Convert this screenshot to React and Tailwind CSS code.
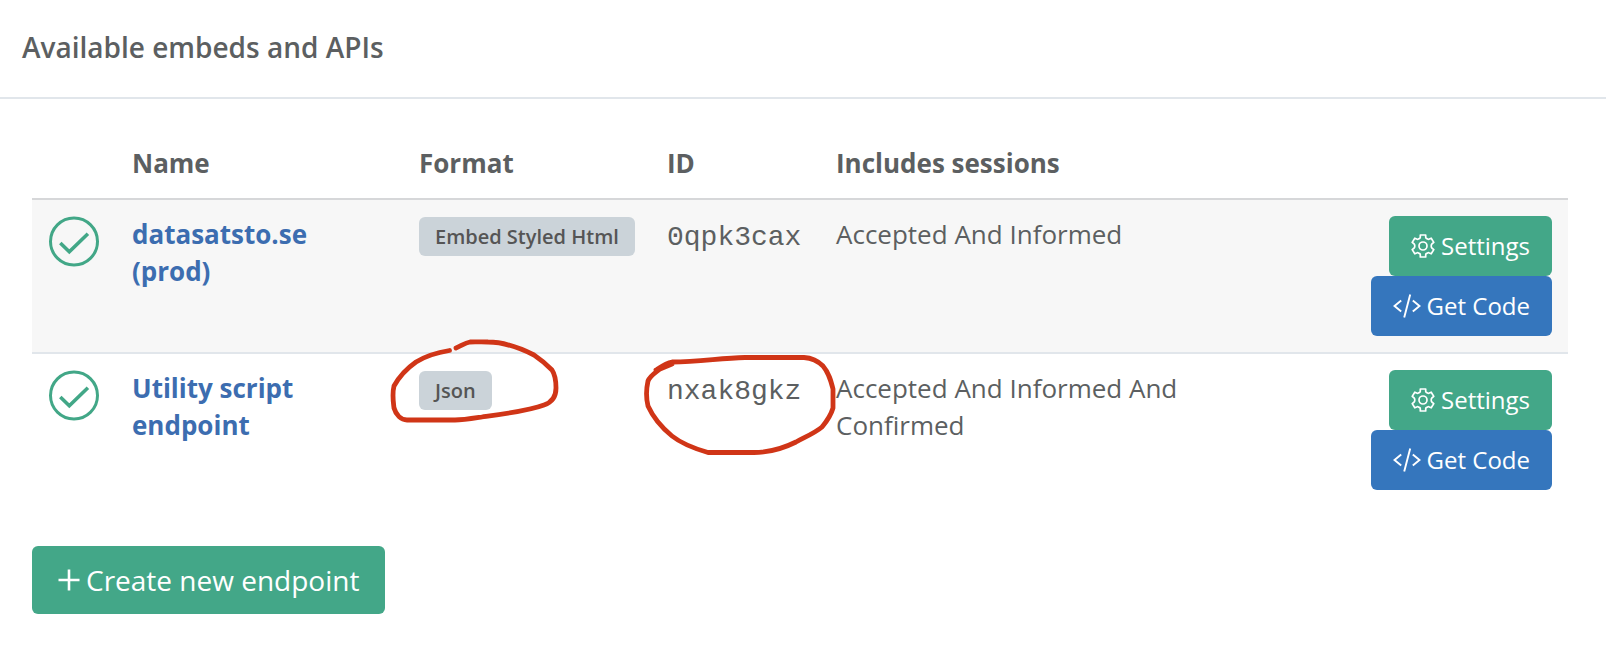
const font = "font-['Open_Sans','Noto_Sans',sans-serif]";

function CheckIcon() {
  return (
    <svg viewBox="0 0 52 52" className="block size-[52px]" fill="none" stroke="#42a787" strokeWidth="3" aria-hidden="true">
      <circle cx="26" cy="25.500" r="23.500" />
      <path strokeWidth="3.600" d="M12.300 27l9 8.700 18.600-17.900" />
    </svg>
  );
}

function GearIcon() {
  return (
    <svg viewBox="0 0 24 24" className="size-6" fill="none" stroke="currentColor" strokeWidth="1.7" strokeLinejoin="round" aria-hidden="true">
      <circle cx="12" cy="12" r="4" />
      <path d="M9.300 1h5.400v2.300q0 .9 1 1.300l.9 .5q.9 .5 1.700 0l1.900-.9 2.600 4.200-1.700 1.300q-.9 .8-.9 2.300t.9 2.300l1.700 1.300-2.600 4.200-1.900-.9q-.8-.5-1.700 0l-.9 .5q-1 .4-1 1.300V23H9.300v-2.300q0-.9-1-1.300l-.9-.5q-.9-.5-1.700 0L3.800 19.800 1.200 15.600l1.700-1.300q.9-.8 .9-2.300t-.9-2.300L1.200 8.400 3.800 4.200l1.900 .9q.8 .5 1.700 0l.9-.5q1-.4 1-1.300z" />
    </svg>
  );
}

function CodeIcon() {
  return (
    <svg viewBox="0 0 28 24" className="h-6 w-7" fill="none" stroke="currentColor" strokeWidth="1.900" aria-hidden="true">
      <path d="M8.200 6.500L1.500 12l6.700 5.500M19.800 6.500L26.500 12l-6.700 5.500M17.200 0.500l-6 23" />
    </svg>
  );
}

function PlusIcon() {
  return (
    <svg viewBox="0 0 22 22" className="size-[22px]" stroke="currentColor" strokeWidth="2.600" aria-hidden="true">
      <path d="M11 0.500v21M0.500 11h21" />
    </svg>
  );
}

function Annotations() {
  return (
    <svg viewBox="370 320 480 150" className="pointer-events-none absolute top-[320px] left-[370px] h-[150px] w-[480px]" fill="none" stroke="#d03517" strokeWidth="4.800" strokeLinecap="round" strokeLinejoin="round" aria-hidden="true">
      <path d="M449.500 350.500C434 353 424 357 416 362C406 369 399 377 394 386C392 394 393 400 394 408C396 415 401 420 407 420H455C463 420 472 418.500 482 417C504 414 528 411 544 405C553 402 556 396 556 388C556 382 556 376 552 370C546 364 540 359 534 355C520 348 504 342 488 342C481 341.500 475 342 470 342C465 343 461 346 456 348" />
      <path d="M656 370C662 366 666 363 672 362C700 362 720 358 745 357.500H804C812 358 818 361 823 366C829 373 831 381 833 389V408C831 415 827 421 822 427C815 433 805 437 796 442C784 448 772 452.500 754 452.500H708C696 449 682 444 672 436C661 427 653 417 648 406C646 398 646 390 648 381C650 376 655 373 660 369L672 364" />
    </svg>
  );
}

const endpoints = [
  { name: "datasatsto.se (prod)", format: "Embed Styled Html", id: "0qpk3cax", sessions: "Accepted And Informed" },
  { name: "Utility script endpoint", format: "Json", id: "nxak8gkz", sessions: "Accepted And Informed And Confirmed" },
];

const th = "px-4 pt-4 pb-4 text-left font-bold";
const td = "px-4 py-4 align-top";
const action = "flex h-[60px] items-center gap-1.5 rounded-md px-[22px] text-2xl text-white";

export default function App() {
  return (
    <main className={`relative min-h-screen bg-white text-[26px] leading-[37px] text-[#5c5f61] ${font}`}>
      <header className="border-b-2 border-[#e1e6eb] px-[22px] pt-[29px] pb-[31px]">
        <h1 className="text-[28px] font-semibold">Available embeds and APIs</h1>
      </header>
      <section className="pt-[30px] pr-[38px] pb-8 pl-8">
        <table className="w-full table-fixed border-collapse">
          <colgroup>
            <col className="w-[84px]" />
            <col className="w-[287px]" />
            <col className="w-[248px]" />
            <col className="w-[169px]" />
            <col />
            <col className="w-[300px]" />
          </colgroup>
          <thead>
            <tr className="border-b-2 border-[#d6d7d9]">
              <th className={th}></th>
              <th className={th}>Name</th>
              <th className={th}>Format</th>
              <th className={th}>ID</th>
              <th className={th}>Includes sessions</th>
              <th className={th}></th>
            </tr>
          </thead>
          <tbody>
            {endpoints.map((e) => (
              <tr key={e.id} className="border-b-2 border-[#e1e6eb] last:border-b-0 odd:bg-[#f7f7f7]">
                <td className={td}><CheckIcon /></td>
                <td className={td}>
                  <a href="#" className="font-bold text-[#3c6db0]">{e.name}</a>
                </td>
                <td className={td}>
                  <span className="inline-block rounded-md bg-[#cbd3d9] px-4 text-xl leading-[39px] font-semibold whitespace-nowrap text-[#555]">{e.format}</span>
                </td>
                <td className={td}>
                  <code className="block font-['Liberation_Mono',monospace] text-[28px] leading-[44px]">{e.id}</code>
                </td>
                <td className={td}>{e.sessions}</td>
                <td className={td}>
                  <div className="flex flex-col items-end">
                    <button type="button" className={`${action} bg-[#43a788]`}><GearIcon />Settings</button>
                    <button type="button" className={`${action} bg-[#3576bd]`}><CodeIcon />Get Code</button>
                  </div>
                </td>
              </tr>
            ))}
          </tbody>
        </table>
        <button type="button" className="mt-10 flex h-[68px] items-center gap-1.5 rounded-md bg-[#43a788] px-[26px] text-[28px] text-white">
          <PlusIcon />Create new endpoint
        </button>
      </section>
      <Annotations />
    </main>
  );
}
